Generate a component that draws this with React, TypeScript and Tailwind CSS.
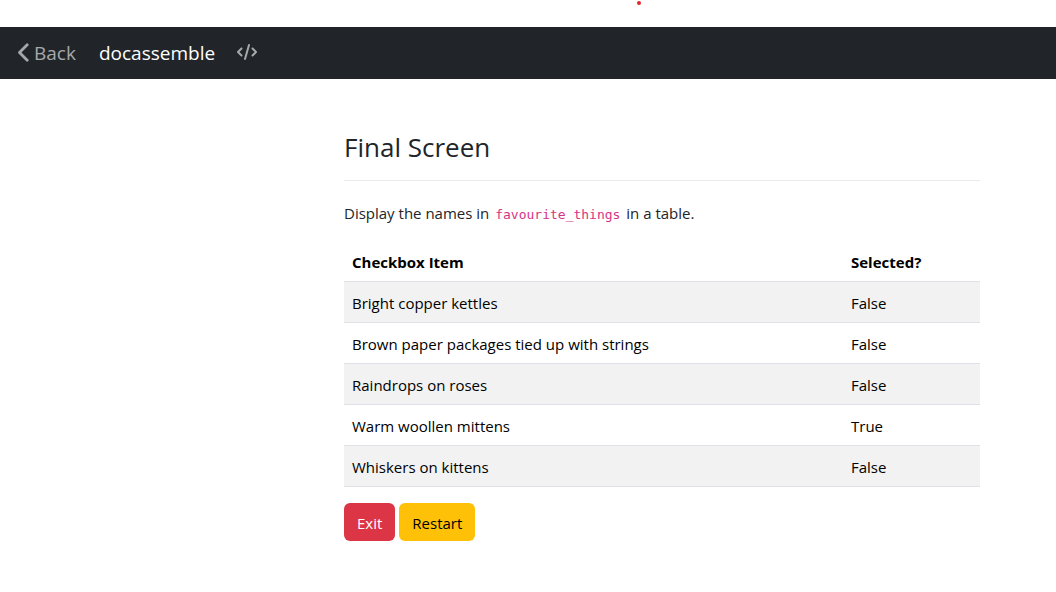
const rows = [
  { item: "Bright copper kettles", selected: false },
  { item: "Brown paper packages tied up with strings", selected: false },
  { item: "Raindrops on roses", selected: false },
  { item: "Warm woollen mittens", selected: true },
  { item: "Whiskers on kittens", selected: false },
];

function Navbar() {
  return (
    <nav className="flex h-[52px] items-center bg-[#212529] px-[17px] text-[19px] leading-[30px]">
      <button type="button" className="flex items-center gap-1 text-[#a6a8a9]">
        <svg viewBox="0 0 13 20" className="h-5 w-[13px]" fill="none" stroke="currentColor" strokeWidth="2.8" strokeLinecap="round" strokeLinejoin="round" aria-hidden="true">
          <path d="M10.200 1.800 2.500 9.500 10.200 17.200" />
        </svg>
        Back
      </button>
      <a href="#" className="ml-[23px] text-white">docassemble</a>
      <button type="button" aria-label="Source" className="ml-[22px] text-[#a6a8a9]">
        <svg viewBox="0 0 640 512" className="mb-0.5 h-4 w-5" fill="currentColor" aria-hidden="true">
          <path d="M392.8 1.2c-17-4.9-34.7 5-39.6 22l-128 448c-4.900 17 5 34.700 22 39.600s34.700-5 39.600-22l128-448c4.900-17-5-34.700-22-39.600zm80.600 120.100c-12.500 12.500-12.500 32.800 0 45.300L562.700 256l-89.400 89.400c-12.500 12.500-12.500 32.800 0 45.300s32.800 12.500 45.300 0l112-112c12.500-12.500 12.500-32.800 0-45.300l-112-112c-12.500-12.500-32.800-12.500-45.300 0zm-306.700 0c-12.500-12.500-32.800-12.500-45.300 0l-112 112c-12.500 12.500-12.500 32.800 0 45.300l112 112c12.500 12.500 32.800 12.500 45.300 0s12.500-32.800 0-45.300L77.300 256l89.400-89.400c12.500-12.500 12.500-32.800 0-45.300z" />
        </svg>
      </button>
    </nav>
  );
}

export default function App() {
  return (
    <div className="bg-white font-['Open_Sans','Noto_Sans',sans-serif] text-[#212529]">
      <header>
        <div className="flex h-[27px] items-start justify-center pl-[222px] pt-px">
          <span className="h-1 w-1 rounded-full bg-[#e3242b]" />
        </div>
        <Navbar />
      </header>
      <main className="ml-[344px] mr-[76px] pt-[51px]">
        <h1 className="text-[26px] leading-[34px]">Final Screen</h1>
        <hr className="mt-4 border-[#e9eaea]" />
        <p className="mt-5 text-[15px] leading-6">
          Display the names in{" "}
          <code className="px-0.5 font-['DejaVu_Sans_Mono',monospace] text-[13px] leading-none text-[#d63384]">favourite_things</code> in a table.
        </p>
        <table className="mt-4 w-full border-collapse text-left text-[15px] leading-6 text-black">
          <thead>
            <tr className="border-b border-[#dee2e6]">
              <th className="px-2 pt-[9px] pb-[7px] font-bold">Checkbox Item</th>
              <th className="w-[137px] px-2 pt-[9px] pb-[7px] font-bold">Selected?</th>
            </tr>
          </thead>
          <tbody>
            {rows.map((row) => (
              <tr key={row.item} className="border-b border-[#dee2e6] odd:bg-[#f2f2f2]">
                <td className="px-2 pt-[9px] pb-[7px]">{row.item}</td>
                <td className="px-2 pt-[9px] pb-[7px]">{row.selected ? "True" : "False"}</td>
              </tr>
            ))}
          </tbody>
        </table>
        <div className="mt-4 flex gap-1 text-[15px] leading-6">
          <button type="button" className="rounded-md bg-[#dc3545] px-[13px] pt-2 pb-1.5 text-white">Exit</button>
          <button type="button" className="rounded-md bg-[#ffc107] px-[13px] pt-2 pb-1.5 text-black">Restart</button>
        </div>
      </main>
    </div>
  );
}
